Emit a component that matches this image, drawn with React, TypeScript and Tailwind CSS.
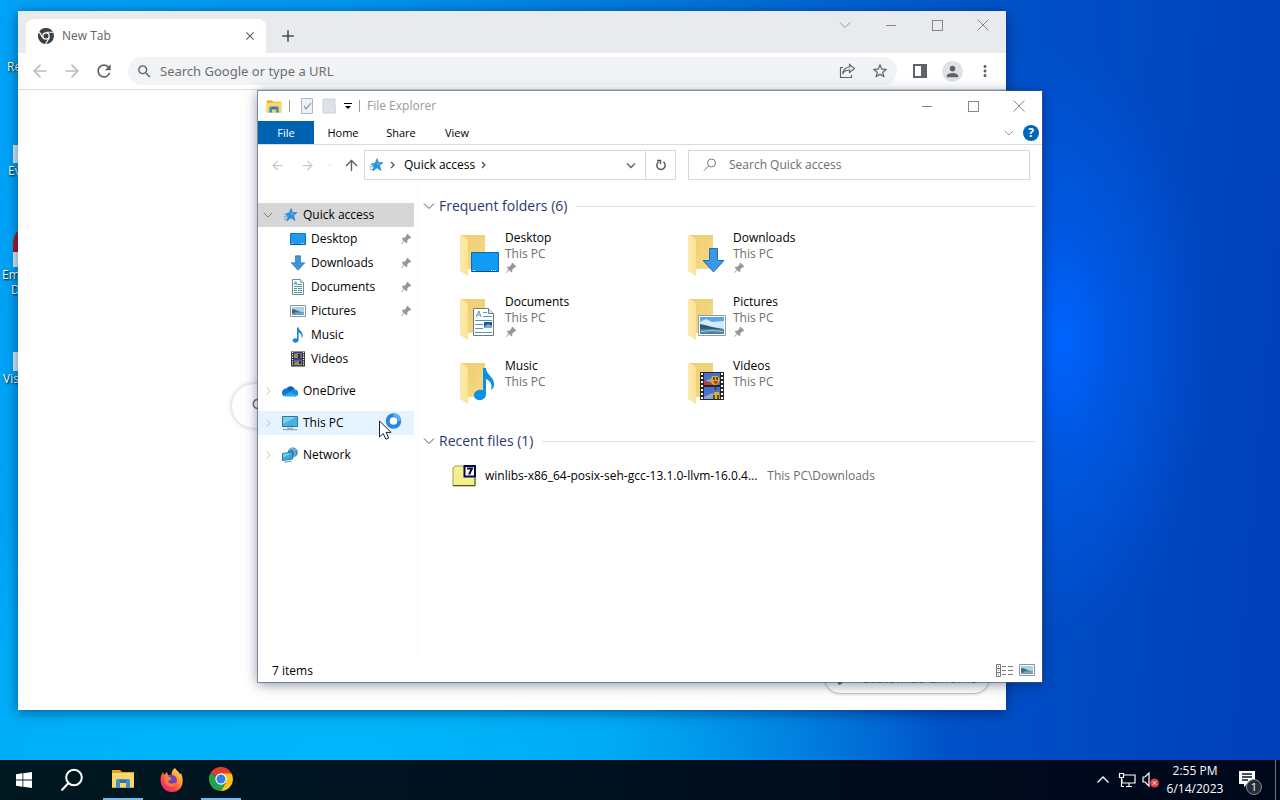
import { useState } from "react";
import type { ReactNode } from "react";
import { ArrowLeft, ArrowRight, ArrowUp, Plus } from "lucide-react";
import {
  MdClose,
  MdMoreVert,
  MdPerson,
  MdRefresh,
  MdSearch,
  MdStarOutline,
} from "react-icons/md";

const ChevronDown = ({ className = "" }) => (
  <svg viewBox="0 0 12 12" className={`shrink-0 ${className}`} fill="none" stroke="currentColor">
    <path d="m1 3.5 5 5 5-5" />
  </svg>
);

const ChevronRight = ({ className = "" }) => (
  <svg viewBox="0 0 12 12" className={`shrink-0 ${className}`} fill="none" stroke="currentColor">
    <path d="m4 1.5 4.5 4.5L4 10.5" />
  </svg>
);

const Crumb = ({ className = "" }) => (
  <svg viewBox="0 0 6 8" className={`h-2 w-1.5 shrink-0 ${className}`} fill="none" stroke="#555" strokeWidth="1.3">
    <path d="m1 1 3 3-3 3" />
  </svg>
);

const Pin = () => (
  <svg viewBox="0 0 12 12" className="size-3 shrink-0">
    <path
      d="M7.5.8 11.2 4.5 10.2 5.6 9.2 5.6 7.3 7.6 7.4 9.2 6.3 10.2 4.3 8.3 1 11.3.7 11 3.6 7.6 1.8 5.7 2.8 4.6 4.4 4.7 6.4 2.8 6.4 1.8Z"
      fill="#92979a"
    />
  </svg>
);

const QuickStar = () => (
  <svg viewBox="0 0 16 16" className="size-4 shrink-0">
    <path
      d="M9.2 1.5 10.4 5.6 15 5.6 11.6 8.6 13 13.4 9 10.8 4.8 14 6 9.6 3 7 7 6.2Z"
      fill="#2794df"
      stroke="#1b78ba"
      strokeWidth=".6"
    />
    <path d="M2.5 7.5h3M1.5 9.8h4M2 12.3h3" stroke="#58aee4" strokeWidth="1" />
    <path d="M9 3.6 9.8 6.4 13 6.6 9.3 8Z" fill="#6cc3f5" />
  </svg>
);

const DesktopIcon = () => (
  <svg viewBox="0 0 16 16" className="size-4">
    <path d="M.5 2.5h15v11H.5z" fill="#1e9bf0" stroke="#1173bd" />
    <path d="M1 13.5h14" stroke="#0c5d9e" />
    <path d="M2 12.5h1M11 12.5h1M13 12.5h1" stroke="#d9efff" />
  </svg>
);

const DownIcon = () => (
  <svg viewBox="0 0 16 16" className="size-4">
    <path
      d="M5.5.8h5v7h4.3L8 15.2 1.2 7.8h4.3z"
      fill="#3d94dd"
      stroke="#2b76b8"
      strokeWidth=".7"
    />
  </svg>
);

const DocIcon = () => (
  <svg viewBox="0 0 16 16" className="size-4">
    <path d="M2.5.5h8l3 3v12h-11z" fill="#fff" stroke="#7c8790" />
    <path d="M10.5.5v3h3" fill="#e3e8eb" stroke="#7c8790" strokeWidth=".7" />
    <path
      d="m4 6 1.7-3.5L7.3 6M4.7 4.8h2M8 5.5h4M4 7.5h8M4 9.5h3M8 9.5h4M4 11.5h3M8 11.5h4M4 13.5h8"
      fill="none"
      stroke="#388ca8"
      strokeWidth=".9"
    />
  </svg>
);

const PictureIcon = () => (
  <svg viewBox="0 0 16 16" className="size-4">
    <path d="M.5 2.5h15v11H.5z" fill="#fff" stroke="#8b9499" />
    <path d="M2 4h12v8H2z" fill="#a4d2ef" />
    <path d="M2 6 5 6.5l4 2 5 1V11H2z" fill="#3d6b70" />
    <path d="M2 10.2h12V12H2z" fill="#6995bb" />
    <path d="M5 10h9" stroke="#c6dce6" strokeWidth=".7" />
  </svg>
);

const MusicIcon = () => (
  <svg viewBox="0 0 16 16" className="size-4">
    <path
      d="M7 .5h1.6c.3 3 4.4 4 4.1 8.2-.1 1.4-.6 2-1.2 2.8C12 8 11 6.4 8.6 5.5v7.3c0 3.6-6 3.7-6 .8 0-2 2.4-3 4.4-2z"
      fill="#1888d5"
    />
  </svg>
);

const VideoIcon = () => (
  <svg viewBox="0 0 16 16" className="size-4">
    <path d="M1 .5h14v15H1z" fill="#222" />
    <path d="M4 1.5h8v6H4zM4 8.5h8v6H4z" fill="#5865b7" />
    <path d="m4 4 4-2 2 3-2 2H4zM4 13l4-3 4 2v2H4z" fill="#a18b53" />
    <path d="M8 3h2v4H8zM9 10h2v3H9z" fill="#2f3424" />
    <path
      d="M2.5 1v14M13.5 1v14"
      stroke="#f2f2f2"
      strokeWidth="1.4"
      strokeDasharray="1.3 1"
    />
  </svg>
);

const OneDriveIcon = () => (
  <svg viewBox="0 0 16 16" className="size-4">
    <path d="M4.2 6A4.6 4.6 0 0 1 12.8 6.5L8.5 10 1.5 7.2C2.3 6.2 3.2 5.8 4.2 6Z" fill="#0864b5" />
    <path d="M4.7 5.6C2 5.3 0 7.4 0 9.8c0 1.4.5 2.4 1.5 3.2L9 9Z" fill="#0f78d2" />
    <path d="M12.4 6.6A3.5 3.5 0 0 1 13 13.6L8 9.3C9 7.6 10.7 6.4 12.4 6.6Z" fill="#1490df" />
    <path d="m8.5 9 6.7 3.6c-.7.8-1.2 1-2.2 1H3.5c-.8 0-1.4-.2-2-.6Z" fill="#28a8ea" />
  </svg>
);

const PcIcon = () => (
  <svg viewBox="0 0 16 16" className="size-4">
    <path d="M.5 1.5h15v10H.5z" fill="#45b2e8" stroke="#37758f" />
    <path d="M1 2h13L1 9z" fill="#7cd0f4" />
    <path d="M5 13.2h6M1 14.7h14" stroke="#7d98a8" />
  </svg>
);

const NetworkIcon = () => (
  <svg viewBox="0 0 16 16" className="size-4">
    <circle cx="10.7" cy="5.5" r="5" fill="#3d8db9" />
    <path d="M7 3c3-3 5 0 7 0M10 1c4 3 4 7 1 10" fill="none" stroke="#9ac9dc" />
    <path d="m.5 6.5 10-1.5v7l-10 1.5z" fill="#35afe3" stroke="#31738e" />
    <path d="m1 7 9-1.3-9 5z" fill="#72cdf0" />
    <path d="m2.5 15.3 7-1.2" stroke="#69899b" />
  </svg>
);

const ExplorerIcon = ({ big = false }) => (
  <svg viewBox="0 0 24 22" className={big ? "h-[22px] w-6" : "h-[15px] w-4"}>
    <path d="M1 2h8l2 2h12v16H1z" fill="#e3a51e" />
    <path d="M1 5h22v14H1z" fill="#fbd66d" />
    <path d="M5 20v-7q0-2 2-2h10q2 0 2 2v7h-4v-5H9v5z" fill="#3f8fc1" />
    <path d="M9 12h6v3H9z" fill="#2c75a8" />
  </svg>
);

const ChromeIcon = ({ mono = false }) => (
  <svg viewBox="0 0 24 24" className={mono ? "size-4 shrink-0" : "size-6"}>
    <path d="M12 12 1.6 6A12 12 0 0 1 22.4 6Z" fill={mono ? "#3c4043" : "#e33b2e"} />
    <path d="M12 12 1.6 6A12 12 0 0 0 12 24l5.2-9Z" fill={mono ? "#3c4043" : "#26a14b"} />
    <path d="M12 6.5h10.6A12 12 0 0 1 12 24l5.2-9Z" fill={mono ? "#3c4043" : "#fbc116"} />
    {mono && (
      <path
        d="M12 6.5h11M7.2 14.8 1.7 5.5M16.8 14.8 11.3 24"
        stroke="#fff"
        strokeWidth="1.6"
      />
    )}
    <circle cx="12" cy="12" r="5.7" fill="#fff" />
    <circle cx="12" cy="12" r={mono ? 3.8 : 4.5} fill={mono ? "#3c4043" : "#377ee6"} />
  </svg>
);

const FirefoxIcon = () => (
  <svg viewBox="0 0 24 24" className="size-6">
    <defs>
      <linearGradient id="fox" x1="1" y1="0" x2=".2" y2="1">
        <stop offset="0" stopColor="#fff04a" />
        <stop offset=".45" stopColor="#ff9136" />
        <stop offset=".75" stopColor="#ff3f4e" />
        <stop offset="1" stopColor="#e52289" />
      </linearGradient>
    </defs>
    <path
      d="M15 0c1 2 4 4 5 6 1 0 1-1 1-1 4 9 1 19-9 19C3 24-1 15 1 8l2-4 1 3 3-3 1 3 4 1c-1-3 0-6 3-8Z"
      fill="url(#fox)"
    />
    <path d="M8 8c3-3 9 0 9 4 0 5-6 7-9 3-2-2 2-2 3-4-1-2-2-2-3-3Z" fill="#7542b9" />
    <path d="M4 9c3-1 6 0 8 2-2 0-2 2-4 2 1 4 6 3 8 1-2 7-12 6-12-5Z" fill="#ff7a39" />
  </svg>
);

const WindowsIcon = () => (
  <svg viewBox="0 0 16 16" className="size-4" fill="#fff">
    <path d="m0 2.2 6.5-.9v6.3H0zM7.3 1.2 16 0v7.6H7.3zM0 8.4h6.5v6.3L0 13.8zM7.3 8.4H16V16l-8.7-1.2z" />
  </svg>
);

const overlays: Record<string, ReactNode> = {
  Desktop: (
    <>
      <path d="M12.5 18.5h27v19h-27z" fill="#109bf5" stroke="#086ab2" />
      <path d="M13 37.5h26" stroke="#064f87" />
      <path d="M14 36.5h2M32 36.5h1M34 36.5h1M36 36.5h1" stroke="#d8efff" />
    </>
  ),
  Downloads: (
    <path
      d="M22.5 14.5h8v12h6.5L26.5 38 16 26.5h6.5z"
      fill="#3b97ea"
      stroke="#2470b1"
    />
  ),
  Documents: (
    <>
      <path d="M14.5 10.5h15l5 5v22h-20z" fill="#fff" stroke="#747b80" />
      <path d="M29.5 10.5v5h5" fill="#e2e5e7" stroke="#747b80" />
      <path
        d="m17 19 3-6 2 6M18 17h3M24 14.5h4M24 18.5h9M16 22.5h17M16 26.5h8M16 30.5h8M16 34.5h17"
        fill="none"
        stroke="#5297bd"
      />
      <path d="M25 24h8v6h-8z" fill="#2d548f" />
      <path d="m25 29 4-3 4 2v2h-8z" fill="#7aaed0" />
    </>
  ),
  Pictures: (
    <>
      <path d="M11.5 17.5h27v20h-27z" fill="#fff" stroke="#929ca5" />
      <path d="M13 19h24v17H13z" fill="#5ca8e5" />
      <path d="m13 24 6-3 6 3 12-1v8H13z" fill="#d3eaf8" />
      <path d="m13 26 5 1 7 2 12 2v1H13z" fill="#2c5f66" />
      <path d="M13 31h24v5H13z" fill="#4c80b0" />
      <path d="m14 33.5 11-1 11 1" stroke="#a7cce0" fill="none" />
    </>
  ),
  Music: (
    <path
      d="M24 6h3c0 7 9 9 8 17 0 2-1 4-3 5 2-6-1-9-5-11v15c0 8-12 8-12 1 0-4 5-6 9-5z"
      fill="#0b91e5"
    />
  ),
  Videos: (
    <>
      <path d="M13 10h24v28H13z" fill="#252525" />
      <path d="M17 11h16v12H17zM17 25h16v12H17z" fill="#4a70cc" />
      <path d="m17 20 7-4 3 5-4 2h-6zM17 35l8-4 8 4v2H17z" fill="#8ba6c6" />
      <path d="m17 19 6 1 4 3H17z" fill="#bb3f37" />
      <path d="M25 14h6l2 4-3 5h-4l-2-5zM27 30h5l1 7h-7z" fill="#e7ac21" />
      <path d="M27 15v3M30 15v3M28.5 23v5M27 33v4M31 33v4" stroke="#233d31" strokeWidth="1.5" />
      <path d="M26 19h5l-2 4z" fill="#b8322c" />
      <path
        d="M15 11v27M35 11v27"
        stroke="#fff"
        strokeWidth="2"
        strokeDasharray="2 2"
      />
    </>
  ),
};

const FolderIcon = ({ name }: { name: string }) => (
  <svg viewBox="0 0 42 48" className="h-12 w-[42px] shrink-0">
    <defs>
      <linearGradient id={`back${name}`} x2="1" y2="1">
        <stop stopColor="#ecca72" />
        <stop offset="1" stopColor="#f8dc85" />
      </linearGradient>
      <linearGradient id={`front${name}`} x2="1">
        <stop stopColor="#fbeab2" />
        <stop offset="1" stopColor="#fde391" />
      </linearGradient>
    </defs>
    <path d="M3 1h23v34H8z" fill={`url(#back${name})`} />
    <path d="M1 1q7 2 8 5v36L1 37z" fill={`url(#front${name})`} />
    {overlays[name]}
  </svg>
);

const WinControls = ({ className = "" }) => (
  <div className={`flex text-[#85888b] ${className}`}>
    <button aria-label="Minimize" className="flex h-7 w-[46px] items-center justify-center">
      <span className="h-px w-2.5 bg-current" />
    </button>
    <button aria-label="Maximize" className="flex h-7 w-[46px] items-center justify-center">
      <span className="size-[11px] border border-current" />
    </button>
    <button aria-label="Close" className="flex h-7 w-[46px] items-center justify-center">
      <svg viewBox="0 0 12 12" className="size-3" stroke="currentColor">
        <path d="m.5.5 11 11m0-11-11 11" />
      </svg>
    </button>
  </div>
);

const pinned = [
  { name: "Desktop", icon: <DesktopIcon />, pin: true },
  { name: "Downloads", icon: <DownIcon />, pin: true },
  { name: "Documents", icon: <DocIcon />, pin: true },
  { name: "Pictures", icon: <PictureIcon />, pin: true },
  { name: "Music", icon: <MusicIcon />, pin: false },
  { name: "Videos", icon: <VideoIcon />, pin: false },
];

const roots = [
  { name: "OneDrive", icon: <OneDriveIcon /> },
  { name: "This PC", icon: <PcIcon />, hover: true },
  { name: "Network", icon: <NetworkIcon /> },
];

function Chrome() {
  const [url, setUrl] = useState("");
  return (
    <section className="absolute top-[11px] left-[18px] flex h-[699px] w-[988px] flex-col overflow-hidden bg-white shadow-[0_2px_12px_rgba(0,20,60,0.55)]">
      <header className="flex h-[42px] shrink-0 bg-[#e8eaed] pl-2">
        <div className="mt-2 flex h-[34px] w-60 items-center rounded-t-lg bg-white pr-2 pl-3 text-[#5f6368]">
          <ChromeIcon mono />
          <span className="ml-2 flex-1 text-xs">New Tab</span>
          <button aria-label="Close tab" className="flex size-4 items-center justify-center">
            <MdClose size={14} />
          </button>
        </div>
        <button aria-label="New tab" className="mt-2 flex h-[34px] w-11 items-center justify-center text-[#45494d]">
          <Plus size={18} strokeWidth={2} />
        </button>
        <button aria-label="Search tabs" className="ml-auto flex h-7 w-[46px] items-center justify-center text-[#96999c]">
          <ChevronDown className="size-3" />
        </button>
        <WinControls />
      </header>
      <div className="flex h-[37px] shrink-0 items-center border-b border-[#dadce0] text-[#5f6368]">
        <div className="flex w-[110px] shrink-0 items-center justify-between pr-3.5 pl-3">
          <button aria-label="Back">
            <ArrowLeft size={20} strokeWidth={2} className="text-[#babcbe]" />
          </button>
          <button aria-label="Forward">
            <ArrowRight size={20} strokeWidth={2} className="text-[#babcbe]" />
          </button>
          <button aria-label="Reload">
            <MdRefresh size={20} />
          </button>
        </div>
        <div className="flex h-7 flex-1 items-center rounded-full bg-[#f1f3f4] px-2">
          <MdSearch size={17} />
          <input
            aria-label="Address"
            value={url}
            onChange={(e) => setUrl(e.target.value)}
            placeholder="Search Google or type a URL"
            className="ml-[7px] flex-1 bg-transparent pt-px font-['Noto_Sans',sans-serif] text-[13px] outline-none placeholder:text-[#6a6e73]"
          />
          <button aria-label="Share" className="mr-4">
            <svg viewBox="0 0 16 16" className="size-4" fill="none" stroke="currentColor" strokeWidth="1.2">
              <path d="M4 4.5H1.5v10h11V12" />
              <path d="m10.5 1.5 5 4-5 4V7C7 7 5 8 3.8 11 4 6.8 6.3 4.4 10.5 4Z" />
            </svg>
          </button>
          <button aria-label="Bookmark this tab">
            <MdStarOutline size={18} />
          </button>
        </div>
        <button aria-label="Side panel" className="ml-4 size-[14px] border-2 border-r-[6px] border-current" />
        <button aria-label="Profile" className="ml-[15px] flex size-[21px] items-center justify-center rounded-full bg-[#dee1e6]">
          <MdPerson size={17} />
        </button>
        <button aria-label="Chrome menu" className="mr-3 ml-[13px]">
          <MdMoreVert size={18} />
        </button>
      </div>
      <main className="relative flex-1">
        <div className="absolute top-[294px] left-[214px] flex h-11 w-[560px] items-center rounded-full bg-white pl-[18px] text-[#777] shadow-[0_0_5px_rgba(0,0,0,0.25)]">
          <MdSearch size={20} />
        </div>
        <button className="absolute right-4 bottom-4 flex h-8 w-[166px] items-center justify-center gap-3 rounded-full border border-[#c5c8cb] bg-white pt-px text-[13px] text-[#5f6368] shadow-sm">
          <svg viewBox="0 0 12 12" className="size-3" fill="#267bad">
            <path d="m1 9 7-7 2.5 2.5-7 7H1z" />
          </svg>
          Customize Chrome
        </button>
      </main>
    </section>
  );
}

function SectionTitle({ children }: { children: ReactNode }) {
  return (
    <h2 className="flex h-5 items-center text-sm text-[#2c3971]">
      <button aria-label="Collapse group" className="mr-1">
        <ChevronDown className="size-3 text-[#555]" />
      </button>
      {children}
      <span className="ml-2 h-px flex-1 bg-[#e5e5e5]" />
    </h2>
  );
}

function Sidebar() {
  return (
    <nav className="w-[160px] shrink-0 border-r border-[#f9f9f9] pt-[23px]">
      <a href="#quick" className="flex h-6 w-[156px] items-center bg-[#d6d6d6]">
        <ChevronDown className="mr-[9px] ml-[5px] size-2.5 text-[#666]" />
        <QuickStar />
        <span className="ml-[5px]">Quick access</span>
      </a>
      {pinned.map((item) => (
        <a key={item.name} href="#folder" className="flex h-6 w-[156px] items-center gap-[5px] pr-0.5 pl-8">
          {item.icon}
          <span className="flex-1">{item.name}</span>
          {item.pin && <Pin />}
        </a>
      ))}
      {roots.map((item) => (
        <a
          key={item.name}
          href="#root"
          className={`mt-2 flex h-6 w-[156px] items-center ${item.hover ? "bg-[#e5f3ff]" : ""}`}
        >
          <ChevronRight className="mr-[9px] ml-[5px] size-2.5 text-[#bbb]" />
          {item.icon}
          <span className="ml-[5px]">{item.name}</span>
        </a>
      ))}
    </nav>
  );
}

function Explorer() {
  const [query, setQuery] = useState("");
  return (
    <section className="absolute top-[91px] left-[258px] flex h-[591px] w-[784px] flex-col bg-white text-xs text-black shadow-[0_0_0_1px_rgba(70,90,110,0.6),0_2px_12px_rgba(0,20,60,0.5)]">
      <header className="flex h-[30px] shrink-0 items-center pl-2">
        <ExplorerIcon />
        <span className="ml-[7px] h-3 w-px bg-[#999]" />
        <button aria-label="Properties" className="ml-2.5">
          <svg viewBox="0 0 14 16" className="h-4 w-[14px]">
            <path d="M1.5.5h11v15h-11z" fill="#eef2f8" stroke="#aeb7c5" />
            <path d="m4 8 2 3 5-6" fill="none" stroke="#98a6b8" strokeWidth="1.5" />
          </svg>
        </button>
        <button aria-label="New folder" className="ml-2">
          <svg viewBox="0 0 14 16" className="h-4 w-[14px]">
            <path d="M1 1h12v9h1v5H1z" fill="#dbe2e8" stroke="#cbd3da" />
          </svg>
        </button>
        <button aria-label="Customize toolbar" className="ml-2">
          <svg viewBox="0 0 8 8" className="size-2">
            <path d="M0 1h8v1H0zM1 4h6L4 7z" />
          </svg>
        </button>
        <span className="ml-[7px] h-3 w-px bg-[#999]" />
        <h1 className="ml-[7px] text-[#999]">File Explorer</h1>
        <WinControls className="ml-auto" />
      </header>
      <div className="flex h-6 shrink-0 items-center border-b border-[#dadbdc] text-[11px]">
        <button className="h-full w-14 bg-[#0063b1] pt-px text-white">File</button>
        <button className="w-[58px] pt-px">Home</button>
        <button className="w-[58px] pt-px">Share</button>
        <button className="w-[54px] pt-px">View</button>
        <button aria-label="Expand ribbon" className="ml-auto">
          <ChevronDown className="size-2.5 text-[#888]" />
        </button>
        <button
          aria-label="Help"
          className="mr-[3px] ml-[9px] flex size-4 items-center justify-center rounded-full bg-[#0067b8] text-xs font-bold text-white"
        >
          ?
        </button>
      </div>
      <div className="mt-[5px] flex h-[30px] shrink-0 items-center pr-3">
        <div className="flex w-[106px] shrink-0 items-center pl-3 text-[#c7c9cb]">
          <button aria-label="Back">
            <ArrowLeft size={15} strokeWidth={2} />
          </button>
          <button aria-label="Forward" className="ml-[15px]">
            <ArrowRight size={15} strokeWidth={2} />
          </button>
          <button aria-label="Recent locations" className="ml-3">
            <ChevronDown className="size-1.5" />
          </button>
          <button aria-label="Up" className="ml-2.5 text-[#5e6062]">
            <ArrowUp size={17} strokeWidth={2} />
          </button>
        </div>
        <div className="flex h-full w-[312px] shrink-0 items-center border border-[#d9d9d9] pl-[3px]">
          <QuickStar />
          <Crumb className="ml-1.5" />
          <span className="ml-2">Quick access</span>
          <Crumb className="ml-1.5" />
          <button aria-label="Previous locations" className="mr-[9px] ml-auto">
            <svg viewBox="0 0 10 10" className="size-2.5" fill="none" stroke="#666" strokeWidth="1.5">
              <path d="m1 3.5 4 4 4-4" />
            </svg>
          </button>
          <button aria-label="Refresh" className="flex h-full w-[30px] items-center justify-center border-l border-[#d9d9d9]">
            <svg viewBox="0 0 12 12" className="size-3" fill="none" stroke="#505457" strokeWidth="1.4">
              <path d="M3.6 2.8A4.2 4.2 0 1 0 8.4 2.8" />
              <path d="M2 1.5h3.5V5" />
            </svg>
          </button>
        </div>
        <label className="ml-3 flex h-full flex-1 items-center border border-[#d9d9d9] pl-[14px] text-[#6d6d6d]">
          <svg viewBox="0 0 14 14" className="size-[14px]" fill="none" stroke="#777">
            <circle cx="8.5" cy="5" r="4" />
            <path d="M5.5 8 1 12.5" />
          </svg>
          <input
            aria-label="Search Quick access"
            value={query}
            onChange={(e) => setQuery(e.target.value)}
            placeholder="Search Quick access"
            className="ml-3 flex-1 bg-transparent outline-none placeholder:text-[#6d6d6d]"
          />
        </label>
      </div>
      <div className="flex min-h-0 flex-1">
        <Sidebar />
        <main className="flex-1 pt-4 pr-1.5 pl-[5px]">
          <SectionTitle>Frequent folders (6)</SectionTitle>
          <div className="mt-[14px] grid w-[492px] grid-cols-2 pl-9">
            {pinned.map((item) => (
              <a key={item.name} href="#open" className="flex h-16 items-start leading-4">
                <span className="mt-1 flex">
                  <FolderIcon name={item.name} />
                </span>
                <span className="ml-1">
                  <span className="block">{item.name}</span>
                  <span className="block text-[#6d6d6d]">This PC</span>
                  {item.pin && <Pin />}
                </span>
              </a>
            ))}
          </div>
          <div className="mt-[9px]">
            <SectionTitle>Recent files (1)</SectionTitle>
          </div>
          <a href="#recent" className="mt-[13px] flex h-6 items-center pl-[29px]">
            <svg viewBox="0 0 24 22" className="h-[22px] w-6">
              <path d="M1 3 3 1h8l2 3h10v17H1z" fill="#f5f08e" stroke="#a4a34e" />
              <path d="M1 20.5h22V13" fill="none" stroke="#55541c" />
              <path d="M12.5 1h10.5v10.5H12.5z" fill="#fff" stroke="#05055f" strokeWidth="2" />
              <path d="M15 3.5h5l-3 6" fill="none" stroke="#111" strokeWidth="2" />
            </svg>
            <span className="ml-[9px]">winlibs-x86_64-posix-seh-gcc-13.1.0-llvm-16.0.4...</span>
            <span className="ml-2.5 text-[#6d6d6d]">This PC\Downloads</span>
          </a>
        </main>
      </div>
      <footer className="flex h-6 shrink-0 items-center pr-[7px] pl-[14px]">
        <span className="pt-0.5">7 items</span>
        <button aria-label="Details view" className="ml-auto">
          <svg viewBox="0 0 17 13" className="h-[13px] w-[17px]" fill="none" stroke="#777">
            <path d="M.5.5h4v12h-4zM.5 4.5h4M.5 8.5h4M2 2.5h1M2 6.5h1M2 10.5h1M6 2.5h4M12 2.5h5M6 6.5h4M12 6.5h5M6 10.5h4M12 10.5h5" />
          </svg>
        </button>
        <button aria-label="Large icons" className="ml-1.5">
          <PictureIcon />
        </button>
      </footer>
    </section>
  );
}

const DesktopShortcut = ({ className = "", label = "", children = null as ReactNode }) => (
  <a
    href="#shortcut"
    className={`absolute text-xs leading-[15px] whitespace-nowrap text-white [text-shadow:1px_1px_2px_#000] ${className}`}
  >
    {children}
    <span className="block">{label}</span>
  </a>
);

function Taskbar() {
  return (
    <footer className="flex h-10 shrink-0 items-center bg-gradient-to-r from-[#001820] to-[#00071b] text-xs text-white">
      <button aria-label="Start" className="flex h-full w-12 items-center justify-center">
        <WindowsIcon />
      </button>
      <button aria-label="Search" className="flex h-full w-12 items-center justify-center">
        <svg viewBox="0 0 24 24" className="size-6" fill="none" stroke="#fff" strokeWidth="2">
          <circle cx="14" cy="9.5" r="7.8" />
          <path d="m8.5 15-7 7.5" />
        </svg>
      </button>
      <button aria-label="File Explorer" className="mx-[7px] flex h-full w-10 items-center justify-center border-b-2 border-[#76b9ed]">
        <ExplorerIcon big />
      </button>
      <button aria-label="Firefox" className="flex h-full w-11 items-center justify-center">
        <FirefoxIcon />
      </button>
      <button aria-label="Google Chrome" className="ml-[7px] flex h-full w-10 items-center justify-center border-b-2 border-[#76b9ed]">
        <ChromeIcon />
      </button>
      <button aria-label="Hidden icons" className="ml-auto">
        <svg viewBox="0 0 12 12" className="size-3" fill="none" stroke="#fff" strokeWidth="1.3">
          <path d="m.5 8.5 5.5-5.5 5.5 5.5" />
        </svg>
      </button>
      <button aria-label="Network" className="ml-[9px]">
        <svg viewBox="0 0 18 16" className="h-4 w-[18px]" fill="none" stroke="#fff" strokeWidth="1.2">
          <path d="M6 3h11v8H4V7M8 14.5h6M11 11v3M1.5 1.5h4v4h-4zM3.5 5.5v9H6" />
        </svg>
      </button>
      <button aria-label="Volume" className="ml-1.5">
        <svg viewBox="0 0 18 18" className="size-[18px]" fill="none">
          <path d="M1 6h2l4-4v13l-4-4H1z" stroke="#fff" strokeWidth="1.2" />
          <circle cx="12.5" cy="12" r="4.5" fill="#d8423e" />
          <path d="m10.7 10.2 3.6 3.6m0-3.6-3.6 3.6" stroke="#fff" />
        </svg>
      </button>
      <button className="ml-[3px] w-16 text-center leading-[18px]">
        <span className="block">2:55 PM</span>
        <span className="block">6/14/2023</span>
      </button>
      <button aria-label="Notifications" className="relative ml-3 h-6 w-[26px]">
        <svg viewBox="0 0 26 24" className="h-6 w-[26px]">
          <path d="M0 3h16v13H8l-3 3v-3H0z" fill="#fff" />
          <path d="M3 6h10M3 9h10M3 12h6" stroke="#071225" strokeWidth="1.3" />
        </svg>
        <span className="absolute top-[11px] left-[7px] flex size-4 items-center justify-center rounded-full border border-[#888] bg-[#292e35] text-[11px]">
          1
        </span>
      </button>
      <span className="ml-2.5 h-full w-px bg-[#69727d]" />
      <span className="w-1" />
    </footer>
  );
}

export default function App() {
  return (
    <div className="flex min-h-screen flex-col overflow-hidden font-['Open_Sans','Noto_Sans',sans-serif]">
      <div className="relative flex-1 overflow-hidden bg-[radial-gradient(ellipse_150px_300px_at_1060px_340px,rgba(0,100,255,1)_0%,rgba(0,94,240,0.6)_40%,rgba(0,80,210,0)_100%),radial-gradient(ellipse_600px_300px_at_350px_760px,rgba(0,182,250,1)_0%,rgba(0,182,250,0.8)_45%,rgba(0,170,245,0)_100%),linear-gradient(95deg,#00a4f8_0%,#0098ee_25%,#0074da_52%,#0050c8_76%,#003fb8_100%)]">
        <DesktopShortcut className="top-[59px] left-[7px]" label="Recycle Bin" />
        <DesktopShortcut className="top-[145px] left-[8px]" label="Everything">
          <span className="ml-[5px] block h-[18px] w-4 bg-[#d6eef9]" />
        </DesktopShortcut>
        <DesktopShortcut className="top-[224px] left-[2px]" label="Embarcadero">
          <span className="ml-[11px] block h-[28px] w-10 rounded-t-full bg-[#b31325]" />
          <span className="ml-[11px] block h-[15px] w-4 bg-[#d6eef9]" />
        </DesktopShortcut>
        <DesktopShortcut className="top-[282px] left-[11px]" label="Dev-C++" />
        <DesktopShortcut className="top-[352px] left-[3px]" label="Visual Studio">
          <span className="ml-[10px] block h-[19px] w-4 bg-[#d6eef9]" />
        </DesktopShortcut>
        <Chrome />
        <Explorer />
        <svg viewBox="0 0 26 32" className="absolute top-[410px] left-[378px] h-8 w-[26px]">
          <circle cx="15.5" cy="11" r="5.8" fill="#fff" stroke="#2488dc" strokeWidth="4" />
          <path d="M15.5 5a6 6 0 0 1 6 6" fill="none" stroke="#61b3ed" strokeWidth="3" />
          <path d="M1.5 11v16l3.7-3.5 2.7 5.7 2.8-1.2-2.6-5.6h5z" fill="#fff" stroke="#222" />
        </svg>
      </div>
      <Taskbar />
    </div>
  );
}
